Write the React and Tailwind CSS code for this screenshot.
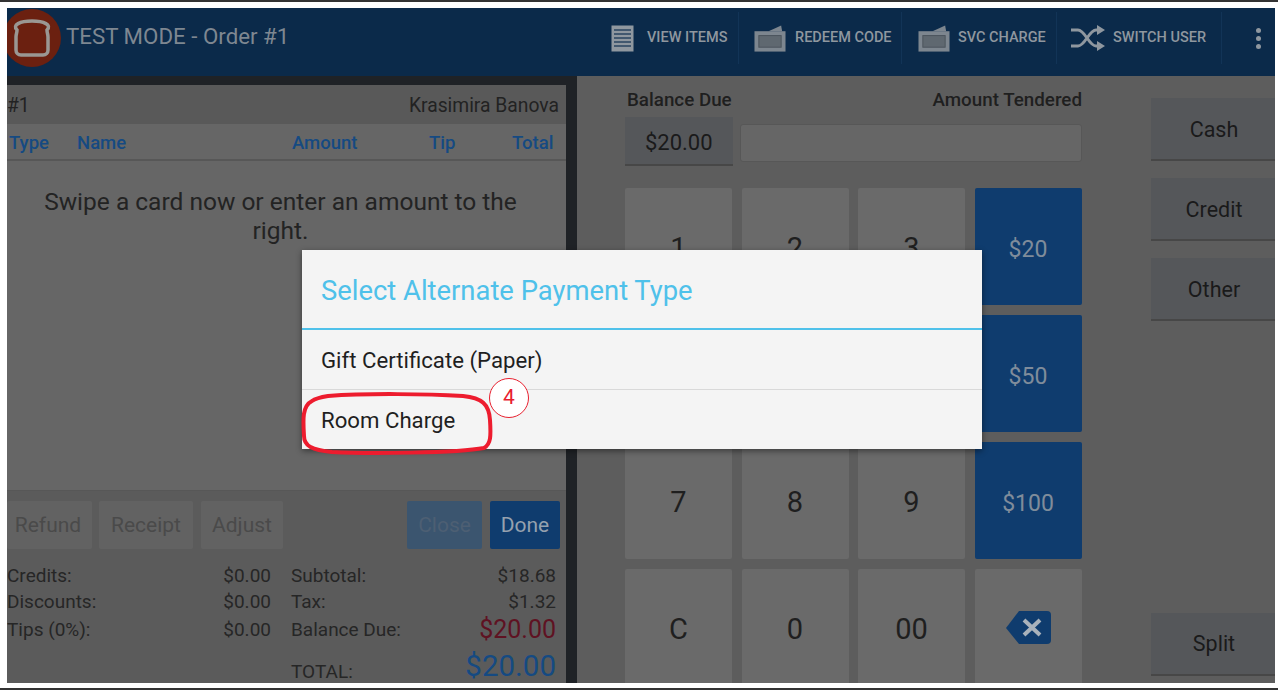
import React from 'react';

const ListIcon = () => (
  <svg width="23" height="27" viewBox="0 0 23 27" className="shrink-0">
    <rect x="0.5" y="0.5" width="22" height="26" fill="#8f979f" />
    <path d="M3 5h17M3 9h17M3 13h17M3 17h17M3 21h17" stroke="#2a4460" strokeWidth="1.5" />
  </svg>
);

const TicketIcon = () => (
  <svg width="32" height="28" viewBox="0 0 33 28" className="shrink-0">
    <path d="M15 7 L28 1 L29 7 Z" fill="#7d868f" />
    <rect x="0.5" y="7" width="32" height="21" fill="#7d868f" />
    <rect x="5" y="11.5" width="23" height="12" fill="#5f6870" stroke="#4b545c" strokeWidth="1" />
  </svg>
);

const ShuffleIcon = () => (
  <svg width="34" height="26" viewBox="0 0 34 26" className="shrink-0">
    <path d="M0 5 H7 C14 5 18 21 25 21 H28 M0 21 H7 C14 21 18 5 25 5 H28" fill="none" stroke="#8f979f" strokeWidth="3" />
    <path d="M26 0 L34 5 L26 10 Z M26 16 L34 21 L26 26 Z" fill="#8f979f" />
  </svg>
);

const BreadIcon = () => (
  <svg width="40" height="38" viewBox="0 0 40 38">
    <path
      d="M5 11 C0 6 8 2 20 2 C32 2 40 6 35 11 C35 14 36 15 36 18 L36 31 C36 34 34 36 31 36 L9 36 C6 36 4 34 4 31 L4 18 C4 15 5 14 5 11 Z"
      fill="none"
      stroke="#9a9793"
      strokeWidth="3.5"
    />
  </svg>
);

const BackspaceIcon = () => (
  <svg width="47" height="35" viewBox="0 0 47 35" className="-mt-[4px]">
    <path d="M14 1 H42 Q46 1 46 5 V30 Q46 34 42 34 H14 L1 18 Z" fill="#0f3c6e" />
    <path d="M19 10 L35 25 M35 10 L19 25" stroke="#a9b2bb" strokeWidth="4" />
  </svg>
);

const NavItem = ({ icon, label, className }) => (
  <div className={`flex items-center h-[52px] border-r border-[#123457] ${className}`}>
    {icon}
    <span className="text-[14.5px] font-medium text-[#8f979f] whitespace-nowrap">{label}</span>
  </div>
);

const Key = ({ children }) => (
  <div className="flex items-center justify-center pt-[4px] rounded-[2px] bg-[#6a6a6a] text-[29px] text-[#1f1f1f]">
    {children}
  </div>
);

const BlueKey = ({ children }) => (
  <div className="flex items-center justify-center pt-[7px] rounded-[2px] bg-[#0f3c6e] text-[23px] text-[#7f8c9b]">
    {children}
  </div>
);

const SideButton = ({ children, className = '' }) => (
  <div className={`h-[63px] flex items-center justify-center pl-[2px] bg-[#55575a] border-b-2 border-[#474747] text-[21.5px] text-[#1a1a1a] ${className}`}>
    {children}
  </div>
);

const SmallButton = ({ children, className }) => (
  <div className={`h-[48px] flex items-center justify-center pt-[2px] rounded-[2px] text-[21px] ${className}`}>{children}</div>
);

const Row = ({ label, value, className = 'text-[19px]', rowClass = 'h-[26px]', labelClass = '' }) => (
  <div className={`flex items-center justify-between text-[#262626] text-[19px] leading-none ${rowClass}`}>
    <span className={labelClass}>{label}</span>
    <span className={className}>{value}</span>
  </div>
);

const App = () => {
  return (
    <div className="relative w-[1278px] h-[690px] overflow-hidden bg-white font-['Roboto',sans-serif] border-y-2 border-[#333333]">
      <div className="absolute inset-0 pl-[7px] pr-[3px] pt-[6px] pb-[5px]">
        <div className="flex flex-col h-full overflow-hidden">
          {/* Top bar */}
          <div className="h-[68px] shrink-0 flex items-center pb-[8px] bg-[#0b2a4a] overflow-hidden">
            <div className="w-[58px] h-[58px] ml-[-4px] shrink-0 rounded-full bg-[#6b2010] flex items-center justify-center">
              <BreadIcon />
            </div>
            <span className="ml-[5px] -mt-[2px] text-[22.3px] text-[#7e8791] whitespace-nowrap">TEST MODE - Order #1</span>
            <div className="flex-1" />
            <NavItem icon={<ListIcon />} label="VIEW ITEMS" className="w-[140px] pl-[12px] gap-[13px]" />
            <NavItem icon={<TicketIcon />} label="REDEEM CODE" className="w-[163px] pl-[15px] gap-[9px]" />
            <NavItem icon={<TicketIcon />} label="SVC CHARGE" className="w-[155px] pl-[16px] gap-[8px]" />
            <NavItem icon={<ShuffleIcon />} label="SWITCH USER" className="w-[165px] pl-[14px] gap-[8px]" />
            <div className="w-[53px] shrink-0 flex flex-col items-center gap-[3px] pl-[19px]">
              <span className="w-[5px] h-[5px] rounded-full bg-[#8f979f]" />
              <span className="w-[5px] h-[5px] rounded-full bg-[#8f979f]" />
              <span className="w-[5px] h-[5px] rounded-full bg-[#8f979f]" />
            </div>
          </div>

          <div className="flex flex-1 min-h-0 bg-[#5d5d5d]">
            {/* Left panel */}
            <div className="w-[559px] shrink-0 flex flex-col border-t-[9px] border-[#1f2226]">
              <div className="h-[39px] shrink-0 flex items-center justify-between pt-[3px] pr-[7px] bg-[#595959] text-[19.3px] text-[#222222]">
                <span>#1</span>
                <span>Krasimira Banova</span>
              </div>
              <div className="h-[37px] shrink-0 flex items-center pt-[5px] bg-[#666666] border-b-2 border-[#575757] text-[18.5px] font-medium text-[#154a82]">
                <span className="ml-[2px] w-[68px]">Type</span>
                <span className="w-[215px]">Name</span>
                <span className="w-[137px]">Amount</span>
                <span className="w-[83px]">Tip</span>
                <span>Total</span>
              </div>
              <div className="h-[330px] shrink-0 bg-[#666666] border-b border-[#575757] pt-[26px] pl-[18px] pr-[30px] text-center text-[24.5px] leading-[29px] text-[#232323]">
                Swipe a card now or enter an amount to the right.
              </div>
              <div className="flex-1 bg-[#5b5b5b] pt-[10px] pr-[6px]">
                <div className="flex items-center text-[#4a4a4a]">
                  <SmallButton className="w-[85px] pr-[3px] bg-[#626262]">Refund</SmallButton>
                  <SmallButton className="w-[94px] ml-[7px] bg-[#626262]">Receipt</SmallButton>
                  <SmallButton className="w-[82px] ml-[8px] bg-[#626262]">Adjust</SmallButton>
                  <div className="flex-1" />
                  <SmallButton className="w-[75px] bg-[#3b556f] text-[#4d5f73]">Close</SmallButton>
                  <SmallButton className="w-[70px] ml-[8px] bg-[#0f3c6e] text-[#95a1ae]">Done</SmallButton>
                </div>
                <div className="flex mt-[13px]">
                  <div className="w-[264px]">
                    <Row label="Credits:" value="$0.00" />
                    <Row label="Discounts:" value="$0.00" />
                    <Row label="Tips (0%):" value="$0.00" rowClass="h-[31px]" />
                  </div>
                  <div className="ml-[20px] w-[265px]">
                    <Row label="Subtotal:" value="$18.68" />
                    <Row label="Tax:" value="$1.32" />
                    <Row label="Balance Due:" value="$20.00" className="text-[25px] text-[#5f1222]" rowClass="h-[31px]" />
                    <Row label="TOTAL:" value="$20.00" className="text-[29.5px] text-[#154a82]" rowClass="h-[44px]" labelClass="pt-[9px]" />
                  </div>
                </div>
              </div>
            </div>

            <div className="w-[11px] shrink-0 bg-[#1f2226]" />

            {/* Right panel */}
            <div className="flex-1 flex min-w-0 pl-[48px]">
              <div className="w-[457px] shrink-0 pt-[13px]">
                <div className="flex justify-between pl-[2px] text-[18.8px] leading-[22px] font-medium text-[#1f1f1f]">
                  <span>Balance Due</span>
                  <span>Amount Tendered</span>
                </div>
                <div className="flex items-center gap-[7px] mt-[6px]">
                  <div className="w-[108px] h-[49px] flex items-center justify-center pt-[3px] bg-[#55575a] border-b-2 border-[#474747] text-[22px] text-[#1a1a1a]">
                    $20.00
                  </div>
                  <div className="w-[344px] h-[38px] mt-[2px] rounded-[3px] bg-[#666666] border border-[#575757]" />
                </div>
                <div className="grid grid-cols-[107px_107px_107px_107px] grid-rows-[117px_117px_117px_117px] gap-x-[9.5px] gap-y-[10px] mt-[22px]">
                  <Key>1</Key>
                  <Key>2</Key>
                  <Key>3</Key>
                  <BlueKey>$20</BlueKey>
                  <Key>4</Key>
                  <Key>5</Key>
                  <Key>6</Key>
                  <BlueKey>$50</BlueKey>
                  <Key>7</Key>
                  <Key>8</Key>
                  <Key>9</Key>
                  <BlueKey>$100</BlueKey>
                  <Key>C</Key>
                  <Key>0</Key>
                  <Key>00</Key>
                  <Key><BackspaceIcon /></Key>
                </div>
              </div>
              <div className="flex-1 ml-[69px] flex flex-col pt-[22px] pb-[7px]">
                <SideButton className="pt-[4px]">Cash</SideButton>
                <SideButton className="mt-[17px] pt-[4px]">Credit</SideButton>
                <SideButton className="mt-[17px] pt-[4px]">Other</SideButton>
                <SideButton className="mt-auto pt-[1px]">Split</SideButton>
              </div>
            </div>
          </div>
        </div>
      </div>

      {/* Dialog */}
      <div className="absolute left-[302px] top-[248px] w-[680px] h-[199px] bg-[#f4f4f4] shadow-[0_2px_6px_rgba(0,0,0,0.45)] text-[#1f1f1f]">
        <div className="h-[80px] flex items-center pl-[19px] pt-[6px] border-b-2 border-[#4fc1ea] text-[27.4px] text-[#4fc1ea]">
          Select Alternate Payment Type
        </div>
        <div className="h-[60px] flex items-center pl-[19px] pt-[2px] border-b border-[#d9d9d9] text-[22.2px]">
          Gift Certificate (Paper)
        </div>
        <div className="h-[59px] flex items-center pl-[19px] pt-[3px] text-[22.2px]">Room Charge</div>
      </div>

      {/* Annotation */}
      <svg className="absolute left-[298px] top-[390px]" width="200" height="66" viewBox="0 0 200 66">
        <path
          d="M30 4 C70 1 130 2 165 4 C184 6 191 12 192 28 C193 44 193 52 186 56 C160 61 70 62 34 60 C14 58 6 54 6 44 C5 28 4 14 14 9 C18 6 24 5 30 4 Z"
          fill="none"
          stroke="#ed1c2e"
          strokeWidth="4"
        />
      </svg>
      <div className="absolute left-[489px] top-[376px] w-[40px] h-[40px] rounded-full bg-white border-[1.5px] border-[#e8202f] flex items-center justify-center text-[21px] text-[#e8202f]">
        4
      </div>
    </div>
  );
};

export default App;
